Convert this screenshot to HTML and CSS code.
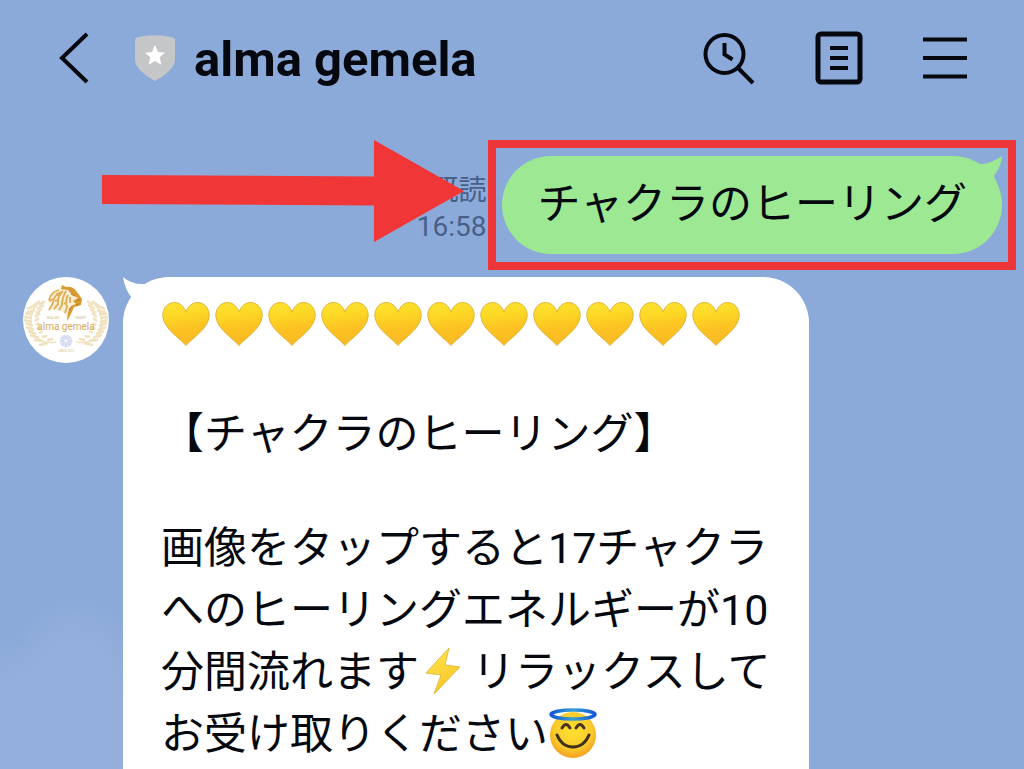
FILE: index.html
```html
<!DOCTYPE html>
<html lang="ja">
<head>
<meta charset="utf-8">
<meta name="viewport" content="width=device-width, initial-scale=1">
<title>alma gemela</title>
<link rel="stylesheet" href="styles.css">
</head>
<body>
<svg class="defs" width="0" height="0" aria-hidden="true">
  <defs>
    <linearGradient id="heart-fill" x1="0.4" y1="0" x2="0.55" y2="1">
      <stop offset="0" stop-color="#fde130"/>
      <stop offset="0.28" stop-color="#fcd825"/>
      <stop offset="0.6" stop-color="#fcc222"/>
      <stop offset="1" stop-color="#f9b825"/>
    </linearGradient>
    <linearGradient id="bolt-fill" x1="0" y1="0" x2="0.4" y2="1">
      <stop offset="0" stop-color="#fee94e"/>
      <stop offset="1" stop-color="#f8c62c"/>
    </linearGradient>
    <radialGradient id="face-fill" cx="0.5" cy="0.4" r="0.62">
      <stop offset="0" stop-color="#fde030"/>
      <stop offset="0.65" stop-color="#fbcb2c"/>
      <stop offset="1" stop-color="#f29a20"/>
    </radialGradient>
    <linearGradient id="halo-stroke" x1="0" y1="0" x2="1" y2="0">
      <stop offset="0" stop-color="#1258d8"/>
      <stop offset="0.5" stop-color="#3aa0cf"/>
      <stop offset="1" stop-color="#1258d8"/>
    </linearGradient>
    <symbol id="heart" viewBox="0 0 53 50">
      <path d="M25 46.500C20 40 2.500 30 1.800 17C1.500 9 7 3.500 13.500 3.500C19 3.500 23 7.500 25 13C27 7.500 31 3.500 36.500 3.500C43 3.500 48.500 9 48.200 17C47.500 30 30 40 25 46.500Z" fill="url(#heart-fill)" stroke="#dfb63c" stroke-width="1"/>
    </symbol>
    <g id="laurel" fill="none" stroke="#f0e2be">
      <path d="M15 26C5 37 4 55 17 63C22 66 28 66 33 65" stroke-width="1.500"/>
      <path d="M17 24l-7 5M14 28l-10 4M12 33l-9 3M10 37l-8 0M9 41l-8-1M9 45l-8-2M10 49l-8-3M11 53l-8-3M13 57l-8-3M16 61l-9-3M20 64l-9-1M25 66l-9 2M16 28l6-4M14 32l7-4M13 36l6-4M12 40l5-4M12 44l4-3M13 48l3-2M14 52l4-2M16 56l4-2M19 60l5-1M24 63l6-1" stroke-width="2.500"/>
    </g>
  </defs>
</svg>

<div class="chat">
  <header class="topbar">
    <button class="icon-button" type="button" aria-label="戻る">
      <svg width="32" height="54" viewBox="0 0 32 54"><path d="M29 3L4 27L29 51" fill="none" stroke="#05080f" stroke-width="4"/></svg>
    </button>
    <svg class="shield" width="42" height="48" viewBox="0 0 42 48" aria-hidden="true">
      <path d="M1 6Q1 4 3 3.500Q21-1 39 3.500Q41 4 41 6V25Q41 36 21 47Q1 36 1 25Z" fill="#c5c6c8"/>
      <path d="M21 11L24 18L31 18.700L25.700 23.300L27.300 30.700L21 27L14.700 30.700L16.300 23.300L11 18.700L18 18Z" fill="#fff"/>
    </svg>
    <h1 class="title">alma gemela</h1>
    <nav class="actions" aria-label="トークメニュー">
      <button class="icon-button" type="button" aria-label="検索">
        <svg width="54" height="54" viewBox="0 0 54 54" fill="none" stroke="#05080f"><circle cx="22.500" cy="23" r="19" stroke-width="4"/><path d="M36 37L51 52" stroke-width="4"/><path d="M22.500 12V23.500L30.500 28.500" stroke-width="4"/></svg>
      </button>
      <button class="icon-button" type="button" aria-label="ノート">
        <svg width="48" height="54" viewBox="0 0 48 54" fill="none" stroke="#05080f"><rect x="3" y="3" width="42" height="48" rx="3" stroke-width="5"/><path d="M15 17H33M15 27H33M15 37H33" stroke-width="4"/></svg>
      </button>
      <button class="icon-button" type="button" aria-label="メニュー">
        <svg width="46" height="54" viewBox="0 0 46 54"><path d="M1 8.500H45M1 27H45M1 45.500H45" fill="none" stroke="#05080f" stroke-width="4"/></svg>
      </button>
    </nav>
  </header>

  <main class="messages">
    <section class="sent">
      <p class="meta"><span>既読</span><time>16:58</time></p>
      <div class="highlight">
        <p class="bubble bubble-sent">チャクラのヒーリング
          <svg class="tail-sent" width="40" height="40" viewBox="0 0 40 40" aria-hidden="true"><path d="M0 7Q10 9 20 8Q30 7 40 0Q39 11 32 20L37 32L18 40L0 22Z" fill="#9ce893"/></svg>
        </p>
      </div>
      <svg class="arrow" width="362" height="102" viewBox="0 0 362 102" aria-hidden="true"><path d="M0 35L272 36.500V0L362 51L272 102V65.500L0 64Z" fill="#f03636"/></svg>
    </section>

    <section class="received">
      <svg class="avatar" width="86" height="86" viewBox="0 0 86 86" role="img" aria-label="alma gemela">
        <circle cx="43" cy="43" r="43" fill="#fff"/>
        <use href="#laurel"/>
        <use href="#laurel" transform="translate(86 0) scale(-1 1)"/>
        <path d="M25 24Q27 15 37 12L39 8L43 10Q50 9 54 15L59 23L57 29L50 31L47 38L44 44Q44 38 40 35Q33 32 26 33L29 28Z" fill="#f9eed2"/>
        <path d="M38 12L39 8L43 10Q50 9 54 15L59 22L58 28L51 30L48 37L44 44L45 35L48 29L53 27L50 24L55 21L49 18L45 13Z" fill="#d99c35"/>
        <path d="M36 13Q28 15 26 23M38 15Q31 18 30 26L26 33M40 14Q34 20 35 27L31 32M43 14Q39 21 39 28L36 33M45 18Q42 24 44 30L42 36M26 24L30 22M47 20L47 26M33 17L37 19M32 24L35 23M41 27L44 25" fill="none" stroke="#dfae54" stroke-width="1.800"/>
        <path d="M48 17L52 19M54 23L57 23M53 28L56 27M46 33L48 30" fill="none" stroke="#b87a20" stroke-width="1"/>
        <circle cx="43" cy="64" r="6" fill="#e0e5f3" stroke="#dde3f2" stroke-width="1"/>
        <path d="M43 59V69M38 64H48M39 60L47 68M47 60L39 68" stroke="#c6d0ea" stroke-width="1"/>
        <circle cx="43" cy="64" r="2" fill="#eef1f9"/>
        <text class="logo-name" x="43" y="53" text-anchor="middle">alma gemela</text>
        <text class="logo-small" x="30" y="42" text-anchor="middle">HEALING</text>
        <text class="logo-small" x="58" y="42" text-anchor="middle">PARROT</text>
        <text class="logo-small" x="43" y="75" text-anchor="middle">SINCE 2013</text>
      </svg>
      <article class="bubble bubble-received">
        <svg class="tail-received" width="40" height="40" viewBox="0 0 40 40" aria-hidden="true"><path d="M0 0Q9 8 22 7Q29 6 36 3V34L2 38Q3 28 9 21Q2 13 0 0Z" fill="#fff"/></svg>
        <p class="hearts" role="img" aria-label="黄色いハート11個">
          <svg class="emoji"><use href="#heart"/></svg><svg class="emoji"><use href="#heart"/></svg><svg class="emoji"><use href="#heart"/></svg><svg class="emoji"><use href="#heart"/></svg><svg class="emoji"><use href="#heart"/></svg><svg class="emoji"><use href="#heart"/></svg><svg class="emoji"><use href="#heart"/></svg><svg class="emoji"><use href="#heart"/></svg><svg class="emoji"><use href="#heart"/></svg><svg class="emoji"><use href="#heart"/></svg><svg class="emoji"><use href="#heart"/></svg>
        </p>
        <p class="heading">【チャクラのヒーリング】</p>
        <p class="body">画像をタップすると17チャクラ<br>へのヒーリングエネルギーが10<br>分間流れます<svg class="emoji" viewBox="0 0 53 50" role="img" aria-label="稲妻"><path d="M30 2L7 27L22 29L15 48L41 21L26 19Z" fill="url(#bolt-fill)" stroke="#e3bb42" stroke-width="1" stroke-linejoin="round"/></svg>リラックスして<br>お受け取りください<svg class="emoji" viewBox="0 0 53 50" role="img" aria-label="天使の笑顔"><circle cx="25" cy="27" r="23" fill="url(#face-fill)"/><path d="M14 20Q18 13 22 20M28 20Q32 13 36 20" fill="none" stroke="#4a351c" stroke-width="3" stroke-linecap="round"/><path d="M9 27Q14 39 25 39Q36 39 41 27" fill="none" stroke="#3e321c" stroke-width="3" stroke-linecap="round"/><ellipse cx="25" cy="6.500" rx="22" ry="4.500" fill="none" stroke="url(#halo-stroke)" stroke-width="3.500"/></svg></p>
      </article>
    </section>
  </main>
</div>
</body>
</html>
```
FILE: styles.css
```css
* {
  box-sizing: border-box;
}

body {
  margin: 0;
  background: #8caad9;
  color: #05080f;
  font-family: Roboto, "Noto Sans CJK JP", sans-serif;
}

h1,
p {
  margin: 0;
}

svg {
  display: block;
  flex: none;
}

.defs {
  position: absolute;
}

.chat {
  display: flex;
  flex-direction: column;
  height: 100vh;
  overflow: hidden;
  background:
    radial-gradient(ellipse 70px 90px at 76px 690px, #94afdb 50%, transparent 100%),
    radial-gradient(ellipse 160px 120px at 20px 760px, #94afdb 60%, transparent 100%),
    #8caad9;
}

.topbar {
  display: flex;
  align-items: center;
  height: 116px;
  padding: 0 56px 0 58px;
}

.icon-button {
  padding: 0;
  border: 0;
  background: none;
  color: inherit;
  cursor: pointer;
}

.shield {
  margin-left: 44px;
}

.title {
  margin-left: 18px;
  padding-top: 4px;
  font-size: 49px;
  font-weight: 700;
  line-height: 60px;
  white-space: nowrap;
}

.actions {
  display: flex;
  align-items: center;
  gap: 60px;
  margin-left: auto;
}

.actions .icon-button + .icon-button {
  margin-left: -1px;
}

.messages {
  display: flex;
  flex: 1;
  flex-direction: column;
  gap: 7px;
  padding-top: 24px;
}

.sent {
  position: relative;
  display: flex;
  justify-content: flex-end;
  padding-right: 8px;
}

.meta {
  display: flex;
  flex-direction: column;
  align-items: flex-end;
  padding: 33px 2px 0 0;
  color: #485f88;
  font-size: 28px;
  line-height: 36px;
}

.highlight {
  padding: 8px 6px;
  border: 8px solid #ee3638;
}

.bubble {
  position: relative;
  font-size: 43px;
  white-space: nowrap;
}

.bubble-sent {
  padding: 16px 35px 18px;
  border-radius: 49px;
  background: #9ce893;
  line-height: 64px;
}

.tail-sent {
  position: absolute;
  top: 0;
  right: 0;
}

.arrow {
  position: absolute;
  top: 0;
  right: 560px;
}

.received {
  display: flex;
  flex: 1;
  align-items: stretch;
  gap: 14px;
  padding-left: 23px;
}

.bubble-received {
  flex: 0 1 686px;
  padding: 16px 38px 0;
  border-radius: 46px 46px 0 0;
  background: #fff;
  line-height: 62px;
}

.tail-received {
  position: absolute;
  top: 0;
  left: 0;
}

.emoji {
  display: inline-block;
  width: 53px;
  height: 50px;
  vertical-align: -9px;
}

.hearts {
  display: flex;
  align-items: center;
  height: 62px;
}

.heading {
  margin-top: 48px;
}

.body {
  margin-top: 52px;
}

.logo-name {
  fill: #d6a955;
  font-size: 10px;
}

.logo-small {
  fill: #d6b878;
  font-size: 3px;
}
```
